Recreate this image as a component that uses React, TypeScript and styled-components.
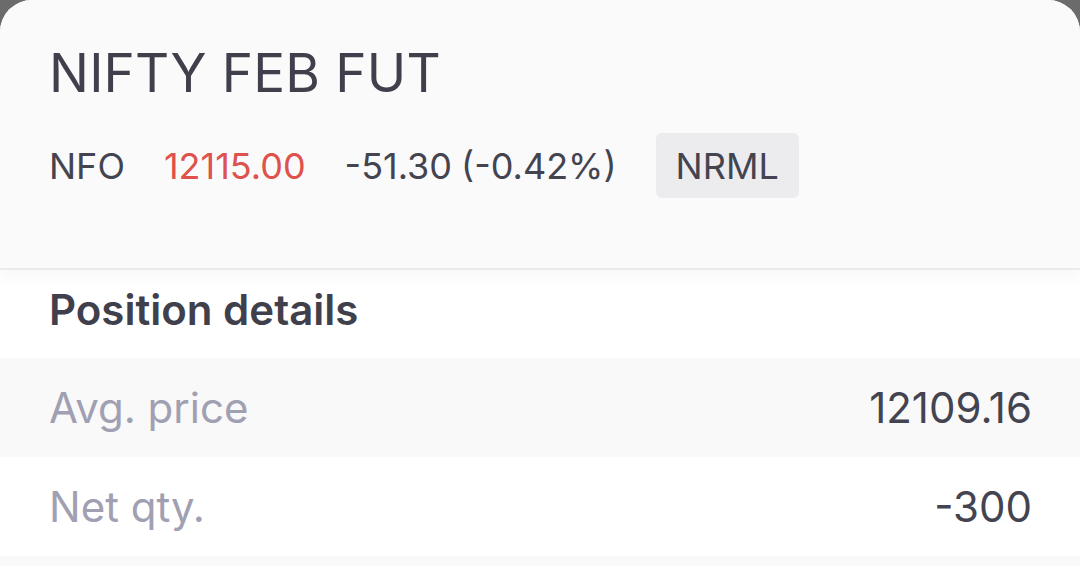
import styled, { createGlobalStyle } from 'styled-components'

const GlobalStyle = createGlobalStyle`
  html, body {
    margin: 0;
    padding: 0;
    background: #6b6b6b;
  }
  body {
    font-family: Inter, "Noto Sans", sans-serif;
    -webkit-font-smoothing: antialiased;
  }
`

const Sheet = styled.div`
  background: #ffffff;
  border-radius: 32px 32px 0 0;
  height: 566px;
  overflow: hidden;
`

const Header = styled.header`
  background: #fafafa;
  height: 270px;
  padding: 41px 49px 0;
  box-sizing: border-box;
  border-bottom: 2px solid #ebebed;
  box-shadow: 0 6px 16px rgba(0, 0, 0, 0.035);
  position: relative;
  z-index: 1;
`

const Title = styled.h1`
  margin: 0;
  font-size: 53px;
  line-height: 64px;
  font-weight: 400;
  color: #40404c;
  letter-spacing: 0.2px;
`

const InfoRow = styled.div`
  display: flex;
  align-items: center;
  gap: 39px;
  margin-top: 28px;
  height: 65px;
  font-size: 36px;
  color: #444450;
`

const Price = styled.span<{ $down?: boolean }>`
  color: ${p => (p.$down ? '#df514c' : '#444450')};
`

const Change = styled.span`
  display: flex;
  gap: 9px;
`

const Badge = styled.span`
  display: flex;
  align-items: center;
  height: 65px;
  padding: 0 20px;
  border-radius: 6px;
  background: #ececef;
  color: #444450;
  font-size: 36px;
`

const SectionTitle = styled.h2`
  margin: 0;
  height: 88px;
  padding: 15px 49px 0;
  box-sizing: border-box;
  font-size: 42px;
  line-height: 50px;
  font-weight: 600;
  color: #40404c;
`

const Row = styled.div<{ $shaded?: boolean }>`
  display: flex;
  justify-content: space-between;
  align-items: center;
  height: 99px;
  padding: 0 48px 0 49px;
  background: ${p => (p.$shaded ? '#f9f9f9' : '#ffffff')};
  font-size: 42px;
`

const Label = styled.span`
  color: #a0a0b2;
`

const Value = styled.span`
  color: #444450;
`

const rows = [
  { label: 'Avg. price', value: '12109.16' },
  { label: 'Net qty.', value: '-300' },
]

export default function App() {
  return (
    <>
      <GlobalStyle />
      <Sheet>
        <Header>
          <Title>NIFTY FEB FUT</Title>
          <InfoRow>
            <span>NFO</span>
            <Price $down>12115.00</Price>
            <Change>
              <span>-51.30</span>
              <span>(-0.42%)</span>
            </Change>
            <Badge>NRML</Badge>
          </InfoRow>
        </Header>
        <SectionTitle>Position details</SectionTitle>
        {rows.map((r, i) => (
          <Row key={r.label} $shaded={i % 2 === 0}>
            <Label>{r.label}</Label>
            <Value>{r.value}</Value>
          </Row>
        ))}
        <Row $shaded />
      </Sheet>
    </>
  )
}
